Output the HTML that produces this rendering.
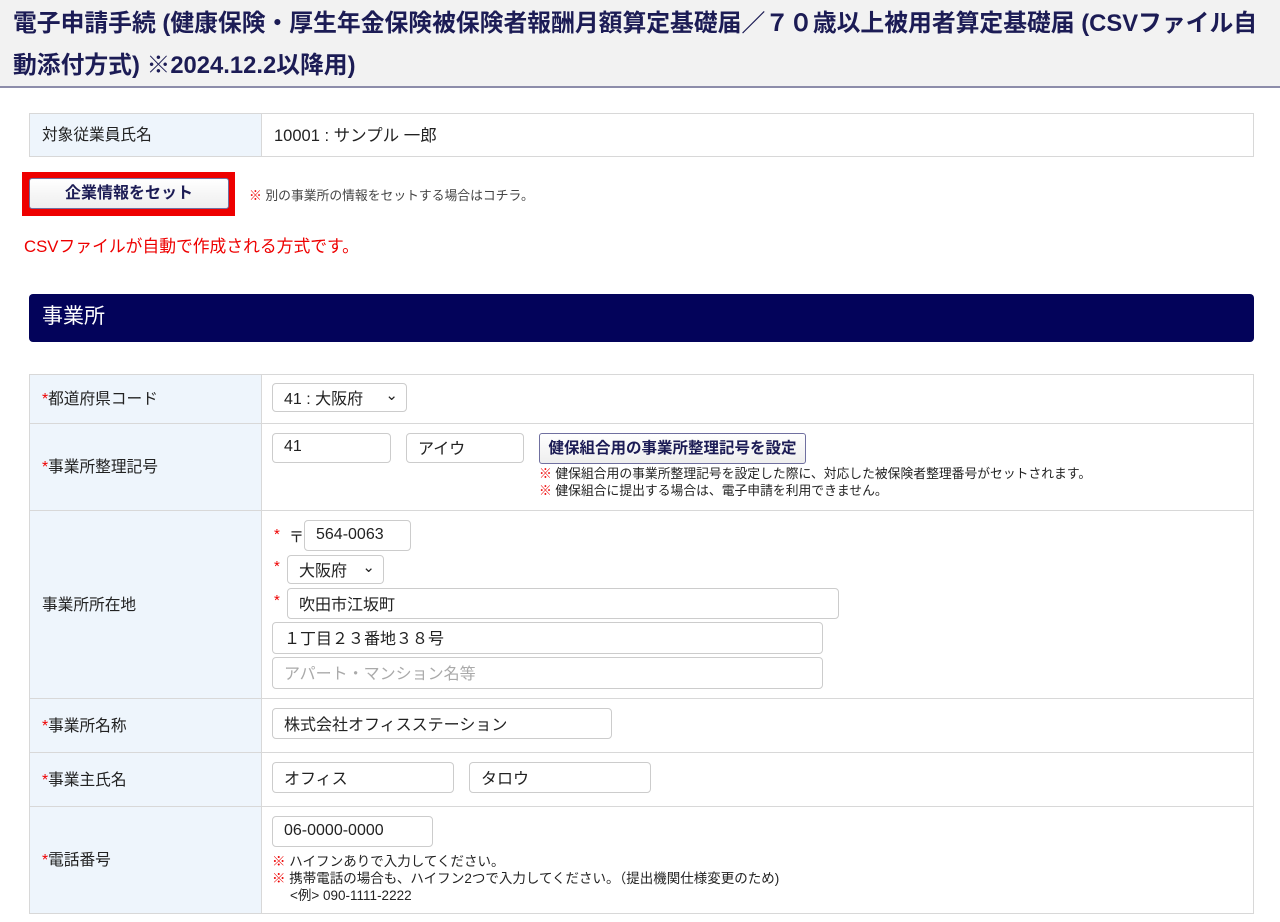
<!DOCTYPE html>
<html><head><meta charset="utf-8"><style>
body{margin:0;width:1280px;height:922px;background:#fff;font-family:"Liberation Sans","Noto Sans CJK JP",sans-serif;color:#222;position:relative;overflow:hidden}
.abs{position:absolute}
.title{left:0;top:0;width:1280px;height:88px;background:#f2f2f2;border-bottom:2px solid #8d8daa;box-sizing:border-box}
.title div{position:absolute;left:13px;font-size:23.8px;font-weight:bold;color:#1c1c55;white-space:nowrap}
table{border-collapse:collapse;position:absolute;left:29px;width:1225px}
td{border:1px solid #d8d8d8;font-size:15.7px;vertical-align:middle;padding:0}
td.l{background:#eef5fc;width:232px;padding-left:12px;box-sizing:border-box;padding-bottom:3px}
.req{color:#e00}
.in{position:absolute;border:1px solid #ccc;border-radius:4px;height:30px;box-sizing:border-box;font-size:16px;padding-left:11px;background:#fff;display:flex;align-items:center;padding-bottom:2px}
.sel:after{content:"⌄";position:absolute;right:8px;top:2px;font-size:15px}
.note{position:absolute;font-size:12.8px;white-space:nowrap}
.note b{color:#e00}
</style></head><body>
<div class="abs title"><div style="top:3px">電子申請手続 (健康保険・厚生年金保険被保険者報酬月額算定基礎届／７０歳以上被用者算定基礎届 (CSVファイル自</div><div style="top:45px">動添付方式) ※2024.12.2以降用)</div></div>

<table style="top:113px;height:44px"><tr><td class="l">対象従業員氏名</td><td style="padding-left:12px;font-size:16.5px;padding-bottom:3px">10001 : サンプル 一郎</td></tr></table>

<div class="abs" style="left:22px;top:172px;width:213px;height:44px;background:#e00"></div>
<div class="abs" style="left:29px;top:178px;width:200px;height:31px;background:linear-gradient(#fff,#eee);border:1px solid #7070a0;border-radius:3px;box-sizing:border-box;text-align:center;font-size:16px;font-weight:bold;color:#1c1c55;line-height:29px">企業情報をセット</div>
<div class="note" style="left:249px;top:185px;color:#444"><b>※</b> 別の事業所の情報をセットする場合はコチラ。</div>
<div class="abs" style="left:24px;top:233px;font-size:16.8px;color:#e00">CSVファイルが自動で作成される方式です。</div>

<div class="abs" style="left:29px;top:294px;width:1225px;height:48px;background:#03035a;border-radius:4px;color:#fff;font-size:21px;line-height:46px;padding-left:13px;box-sizing:border-box">事業所</div>

<table style="top:374px">
<tr style="height:49px"><td class="l"><span class="req">*</span>都道府県コード</td><td></td></tr>
<tr style="height:87px"><td class="l"><span class="req">*</span>事業所整理記号</td><td></td></tr>
<tr style="height:188px"><td class="l">事業所所在地</td><td></td></tr>
<tr style="height:54px"><td class="l"><span class="req">*</span>事業所名称</td><td></td></tr>
<tr style="height:54px"><td class="l"><span class="req">*</span>事業主氏名</td><td></td></tr>
<tr style="height:107px"><td class="l"><span class="req">*</span>電話番号</td><td></td></tr>
</table>

<div class="in sel" style="left:272px;top:383px;width:135px;height:29px">41 : 大阪府</div>
<div class="in" style="left:272px;top:433px;width:119px">41</div>
<div class="in" style="left:406px;top:433px;width:118px">アイウ</div>
<div class="abs" style="left:539px;top:433px;width:267px;height:31px;background:linear-gradient(#fff,#eee);border:1px solid #7070a0;border-radius:3px;box-sizing:border-box;text-align:center;font-size:15.5px;font-weight:bold;color:#1c1c55;line-height:29px">健保組合用の事業所整理記号を設定</div>
<div class="note" style="left:539px;top:463px"><b>※</b> 健保組合用の事業所整理記号を設定した際に、対応した被保険者整理番号がセットされます。</div>
<div class="note" style="left:539px;top:480px"><b>※</b> 健保組合に提出する場合は、電子申請を利用できません。</div>

<div class="abs req" style="left:274px;top:526px;font-size:15px">*</div>
<div class="abs" style="left:289px;top:526px;font-size:15px">〒</div>
<div class="in" style="left:304px;top:520px;width:107px;height:31px">564-0063</div>
<div class="abs req" style="left:274px;top:558px;font-size:15px">*</div>
<div class="in sel" style="left:287px;top:555px;width:97px;height:29px">大阪府</div>
<div class="abs req" style="left:274px;top:592px;font-size:15px">*</div>
<div class="in" style="left:287px;top:588px;width:552px;height:31px">吹田市江坂町</div>
<div class="in" style="left:272px;top:622px;width:551px;height:32px">１丁目２３番地３８号</div>
<div class="in" style="left:272px;top:657px;width:551px;height:32px;color:#aaa">アパート・マンション名等</div>

<div class="in" style="left:272px;top:708px;width:340px;height:31px">株式会社オフィスステーション</div>
<div class="in" style="left:272px;top:762px;width:182px;height:31px">オフィス</div>
<div class="in" style="left:469px;top:762px;width:182px;height:31px">タロウ</div>
<div class="in" style="left:272px;top:816px;width:161px;height:31px">06-0000-0000</div>
<div class="note" style="left:272px;top:850px;font-size:13.5px"><b>※</b> ハイフンありで入力してください。</div>
<div class="note" style="left:272px;top:867px;font-size:13.5px"><b>※</b> 携帯電話の場合も、ハイフン2つで入力してください。（提出機関仕様変更のため)</div>
<div class="note" style="left:290px;top:884px;font-size:13.5px">&lt;例&gt; 090-1111-2222</div>
</body></html>
